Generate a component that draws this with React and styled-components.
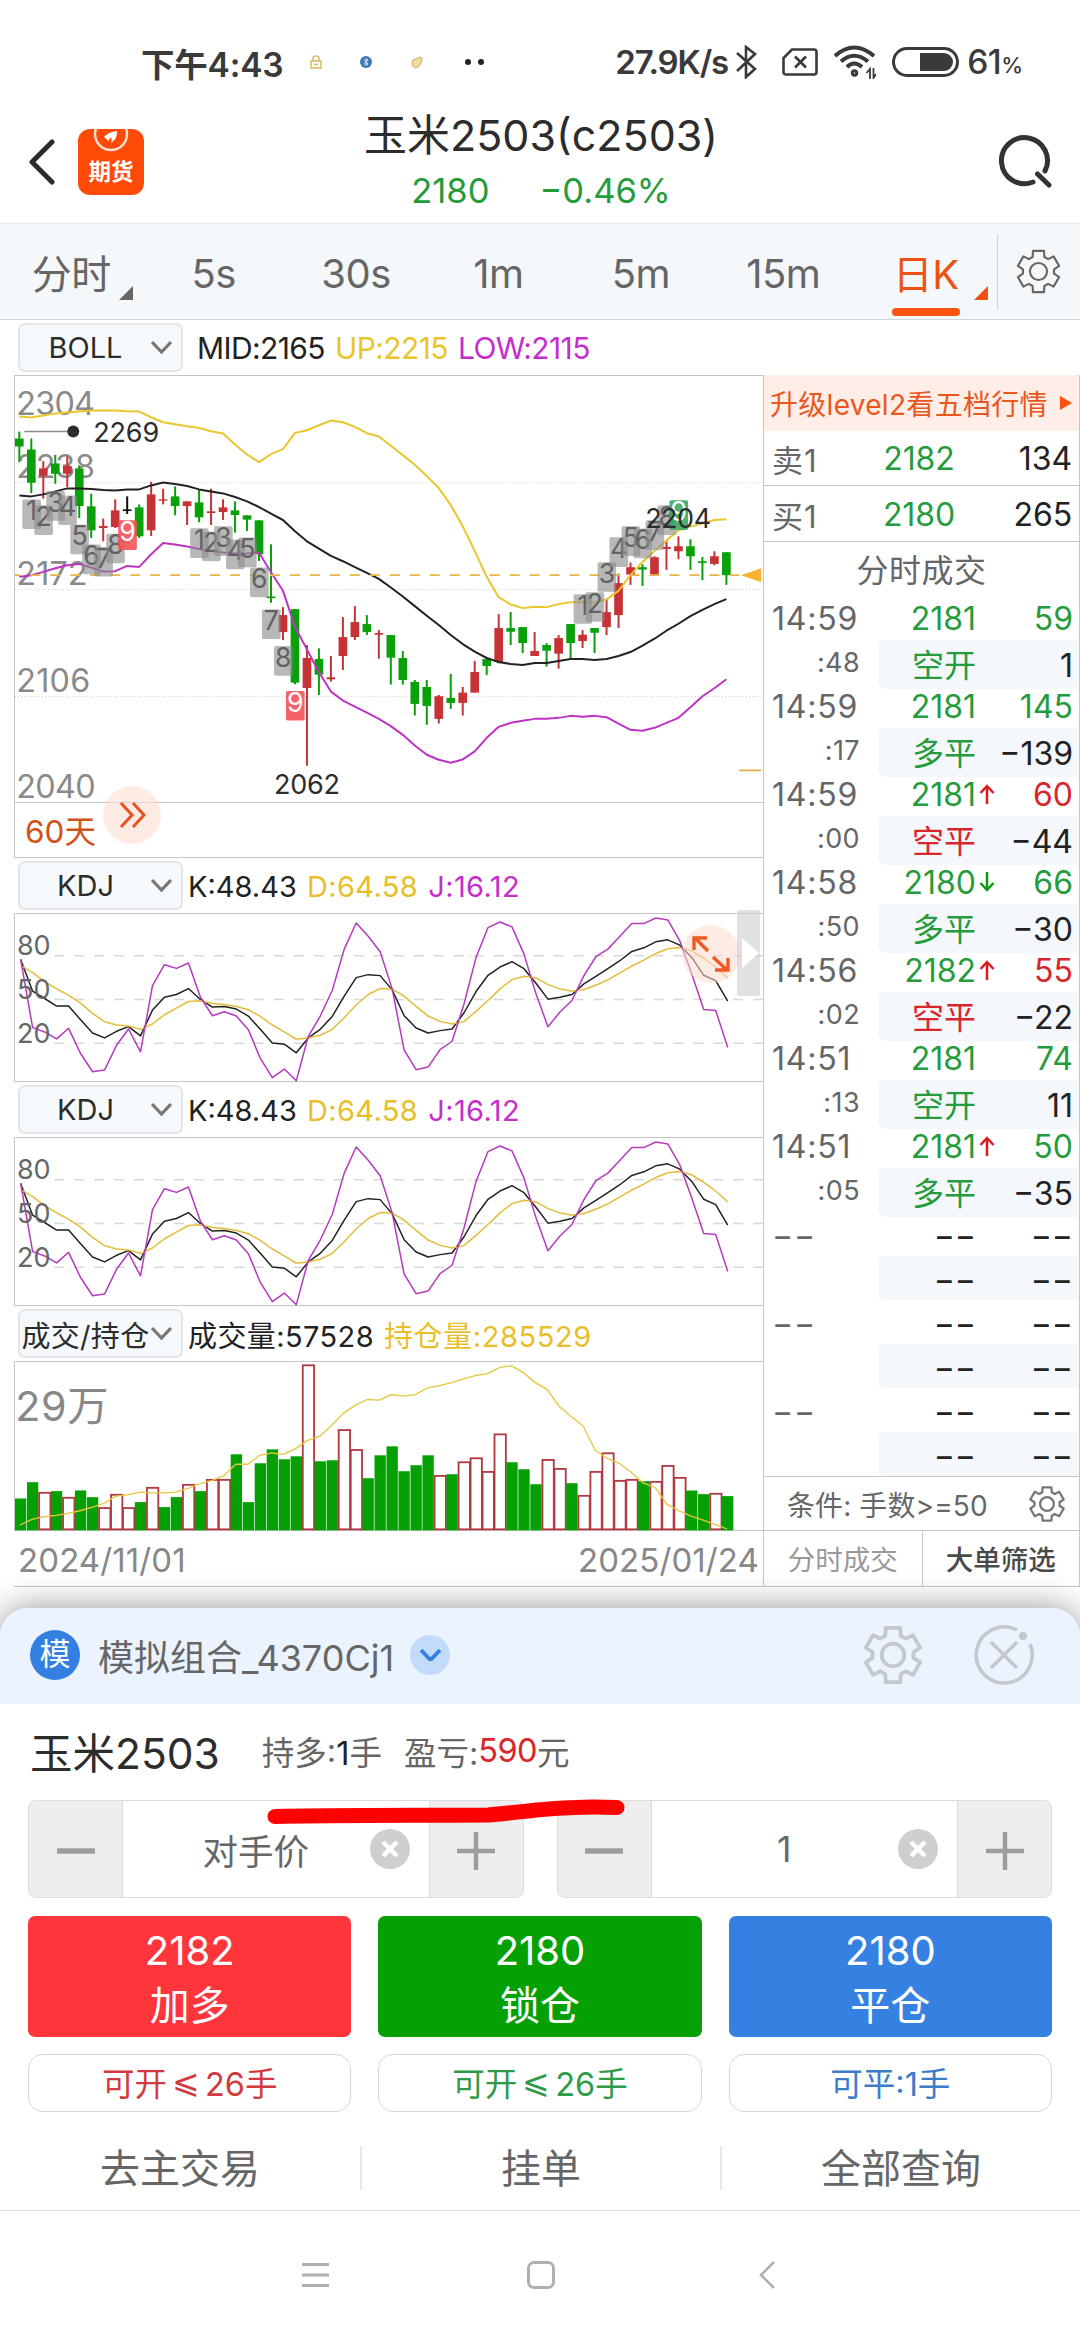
import React from 'react'
import styled, { createGlobalStyle, css } from 'styled-components'

const GlobalStyle = createGlobalStyle`
    * { box-sizing: border-box; }
    body {
        margin: 0;
        background: #fff;
    }
`;

const FONT = `Inter, "Noto Sans CJK SC", sans-serif`;
const GREEN = "#259b3c";
const RED = "#d9262c";
const LINE = "#c6c6c6";

/* ---------- data ---------- */

// [color, high, body top, body bottom, low]
const CANDLES = [
    ["g", 213, 234, 258, 305], ["g", 234, 267, 367, 398], ["r", 302, 324, 346, 415],
    ["g", 283, 309, 340, 370], ["r", 288, 316, 340, 380], ["g", 315, 324, 437, 473],
    ["g", 400, 438, 510, 533], ["r", 475, 497, 503, 543], ["r", 417, 450, 500, 503],
    ["k", 408, 447, 452, 461], ["g", 432, 441, 528, 533], ["r", 364, 402, 510, 527],
    ["r", 385, 417, 421, 432], ["g", 378, 408, 437, 465], ["r", 423, 423, 437, 494],
    ["g", 388, 426, 471, 486], ["r", 385, 453, 458, 494], ["r", 417, 441, 455, 479],
    ["g", 423, 450, 464, 517], ["g", 465, 465, 478, 512], ["g", 480, 480, 582, 602],
    ["g", 552, 709, 714, 728], ["r", 741, 765, 816, 840], ["g", 747, 747, 968, 973],
    ["r", 855, 894, 984, 1218], ["g", 865, 897, 944, 1005], ["r", 888, 952, 958, 965],
    ["r", 771, 831, 888, 930], ["r", 738, 786, 831, 840], ["g", 765, 792, 816, 825],
    ["r", 810, 819, 824, 896], ["g", 825, 825, 893, 974], ["g", 873, 894, 960, 974],
    ["g", 960, 966, 1032, 1067], ["g", 960, 981, 1038, 1095], ["r", 1005, 1009, 1077, 1091],
    ["g", 942, 1014, 1029, 1047], ["r", 981, 998, 1029, 1067], ["r", 903, 936, 998, 998],
    ["g", 893, 897, 918, 945], ["r", 762, 804, 906, 910], ["g", 756, 804, 815, 855],
    ["g", 801, 801, 849, 879], ["r", 816, 873, 888, 888], ["g", 849, 855, 872, 920],
    ["r", 825, 834, 881, 926], ["g", 792, 792, 849, 895], ["r", 810, 824, 843, 864],
    ["g", 804, 804, 818, 879], ["r", 715, 756, 801, 825], ["r", 640, 669, 765, 804],
    ["r", 607, 621, 643, 674], ["g", 612, 621, 628, 677], ["r", 588, 591, 643, 644],
    ["r", 543, 560, 566, 629], ["r", 528, 558, 573, 597], ["g", 537, 558, 588, 629],
    ["g", 590, 603, 608, 660], ["r", 573, 588, 611, 615], ["g", 576, 576, 645, 674],
];

const UP = [168, 171, 165, 159, 156, 153, 150, 150, 150, 152, 153, 170, 185, 191, 197, 202, 212, 219, 252, 282, 305, 281, 266, 217, 209, 194, 180, 185, 199, 218, 228, 256, 284, 313, 347, 383, 434, 498, 572, 650, 711, 733, 744, 740, 741, 732, 726, 726, 726, 718, 692, 645, 605, 572, 541, 510, 499, 490, 479, 477];
const MID = [405, 408, 402, 393, 384, 384, 386, 389, 390, 387, 387, 375, 366, 371, 377, 387, 393, 399, 410, 423, 440, 460, 479, 513, 543, 565, 587, 603, 621, 638, 656, 682, 709, 738, 767, 795, 825, 852, 875, 894, 906, 912, 915, 909, 909, 903, 897, 897, 900, 897, 888, 876, 857, 836, 812, 791, 768, 749, 732, 717];
const LOW = [650, 645, 635, 624, 615, 611, 622, 634, 633, 617, 620, 582, 548, 553, 559, 566, 573, 577, 580, 580, 577, 636, 692, 800, 868, 937, 995, 1022, 1040, 1058, 1077, 1099, 1125, 1157, 1185, 1200, 1209, 1199, 1175, 1134, 1101, 1089, 1083, 1077, 1077, 1074, 1068, 1071, 1068, 1072, 1091, 1110, 1113, 1104, 1089, 1074, 1042, 1009, 985, 958];

const K = [326, 422, 444, 467, 467, 508, 548, 563, 543, 529, 557, 479, 440, 432, 414, 447, 470, 468, 476, 497, 537, 578, 582, 608, 563, 537, 498, 437, 381, 372, 375, 418, 496, 533, 548, 541, 536, 487, 423, 374, 349, 333, 354, 398, 446, 440, 432, 400, 377, 354, 330, 302, 291, 273, 267, 283, 320, 374, 390, 452];
const D = [344, 366, 393, 415, 434, 458, 489, 514, 524, 527, 537, 521, 493, 473, 453, 451, 459, 462, 468, 478, 498, 524, 545, 567, 563, 555, 537, 502, 463, 432, 414, 416, 437, 468, 497, 513, 521, 513, 483, 450, 415, 387, 377, 382, 402, 415, 422, 417, 404, 388, 367, 346, 328, 308, 294, 290, 300, 323, 349, 382];
const J = [326, 532, 545, 566, 534, 610, 665, 660, 585, 536, 605, 405, 342, 353, 337, 440, 496, 484, 497, 538, 625, 683, 657, 692, 558, 497, 420, 295, 216, 256, 303, 415, 600, 659, 651, 598, 573, 460, 320, 230, 213, 228, 310, 430, 529, 485, 450, 375, 318, 295, 256, 218, 218, 201, 207, 270, 370, 477, 480, 592];

const VOLUME = [595, 546, 576, 573, 591, 571, 591, 622, 582, 622, 606, 561, 621, 591, 552, 573, 537, 537, 462, 606, 489, 447, 477, 468, 192, 483, 480, 387, 447, 534, 465, 438, 513, 495, 465, 525, 522, 484, 472, 513, 400, 486, 507, 552, 477, 504, 549, 585, 513, 457, 540, 537, 543, 543, 495, 531, 571, 582, 579, 588];
const VOLUME_COLOR = "ggrgrggrrrgrggrgrrggggggrggrrgggggg" + "rgrrrrgggrrgrrrrrgrrrgg" + "rg";
const OPEN_INTEREST = [675, 658, 650, 646, 640, 632, 622, 610, 588, 584, 576, 578, 578, 576, 565, 550, 541, 527, 492, 492, 465, 458, 462, 445, 420, 408, 375, 338, 314, 297, 299, 282, 287, 282, 262, 255, 246, 235, 225, 219, 201, 195, 216, 246, 267, 318, 348, 377, 450, 474, 489, 516, 548, 562, 613, 632, 648, 660, 673, 687];

// first candle of each count, then the top of every box
const MARKS = [
    { from: 1, tops: [417, 435, 392, 405, 493, 553, 560, 520, 480], last: "#f55257" },
    { from: 15, tops: [504, 514, 498, 538, 532, 622, 748, 858, 993], last: "#f55257" },
    { from: 47, tops: [702, 696, 606, 531, 498, 505, 480, 435, 420], last: "#3fa764" },
];

const TRADES = [
    { time: "14:59", sec: ":48", price: 2181, hands: 59, kind: "空开", change: "1" },
    { time: "14:59", sec: ":17", price: 2181, hands: 145, kind: "多平", change: "−139" },
    { time: "14:59", sec: ":00", price: 2181, arrow: "up", hands: 60, kind: "空平", change: "−44", red: true },
    { time: "14:58", sec: ":50", price: 2180, arrow: "down", hands: 66, kind: "多平", change: "−30" },
    { time: "14:56", sec: ":02", price: 2182, arrow: "up", hands: 55, kind: "空平", change: "−22", red: true },
    { time: "14:51", sec: ":13", price: 2181, hands: 74, kind: "空开", change: "11" },
    { time: "14:51", sec: ":05", price: 2181, arrow: "up", hands: 50, kind: "多平", change: "−35" },
];

const TABS = [
    { name: "分时", more: true }, { name: "5s" }, { name: "30s" }, { name: "1m" },
    { name: "5m" }, { name: "15m" }, { name: "日K", more: true, active: true },
];

/* ---------- styled ---------- */

const Page = styled.div`
    position: relative;
    width: 1080px;
    height: 2340px;
    overflow: hidden;
    display: flex;
    flex-direction: column;
    background: #fff;
    font-family: ${FONT};
    color: #2c2c2c;
    white-space: nowrap;
    svg { display: block; flex: none; }
`;

const StatusBar = styled.div`
    height: 124px;
    padding: 0 58px 0 141px;
    display: flex;
    align-items: center;
    color: #3a3a3a;
    font-size: 33.5px;
    font-weight: 500;
    small { font-size: 22px; margin-top: 6px; letter-spacing: -1px; }
`;

const StatusGroup = styled.div`
    display: flex;
    align-items: center;
    gap: ${p => p.$gap || 0}px;
    margin-left: ${p => p.$end ? "auto" : 0};
`;

const Clock = styled.span`
    margin-right: 27px;
    font-weight: 600;
    letter-spacing: -0.2px;
`;

const Speed = styled.span`
    letter-spacing: -1.1px;
    font-weight: 600;
    font-size: 33px;
    margin-right: 8px;
`;

const Dots = styled.span`
    display: flex;
    gap: 7px;
    margin-left: 4px;
    i { width: 6px; height: 6px; border-radius: 50%; background: #222; }
`;

const Header = styled.header`
    height: 99px;
    display: grid;
    grid-template-columns: 200px 1fr 200px;
    align-items: start;
`;

const HeaderSide = styled.div`
    height: 75px;
    display: flex;
    align-items: center;
    justify-content: ${p => p.$end ? "flex-end" : "flex-start"};
    padding: ${p => p.$end ? "0 27px 0 0" : "0 0 0 28px"};
    gap: 23px;
`;

const AppBadge = styled.div`
    width: 66px;
    height: 66px;
    border-radius: 12px;
    background: #ff4a08;
    display: flex;
    flex-direction: column;
    align-items: center;
    overflow: hidden;
    color: #fff;
    font-size: 22.5px;
    font-weight: 700;
    line-height: 36px;
`;

const Title = styled.div`
    text-align: center;
    padding-left: 2px;
    h1 {
        margin: -14px 0 0;
        font-size: 43px;
        font-weight: 400;
        line-height: 50px;
    }
    p {
        margin: 8px 0 0;
        display: flex;
        justify-content: center;
        gap: 50px;
        font-size: 34.5px;
        line-height: 46px;
        color: ${GREEN};
    }
`;

const TabBar = styled.nav`
    height: 97px;
    display: flex;
    align-items: center;
    background: #f5f8fb;
    border-top: 1px solid #e6eaee;
    border-bottom: 1px solid #cfd6dd;
`;

const Tab = styled.div`
    position: relative;
    flex: 1;
    height: 100%;
    display: flex;
    justify-content: center;
    align-items: center;
    padding-top: ${p => p.$more ? 1 : 4}px;
    font-size: 40px;
    letter-spacing: -0.5px;
    color: ${p => p.$active ? "#ef5113" : "#666"};
    ${p => p.$more && css`
        &::before {
            content: "";
            position: absolute;
            right: 9px;
            bottom: 19px;
            border-left: 14px solid transparent;
            border-bottom: 14px solid currentColor;
        }
    `}
    ${p => p.$active && css`
        &::after {
            content: "";
            position: absolute;
            bottom: 3px;
            left: calc(50% - 34px);
            width: 68px;
            height: 8px;
            border-radius: 4px;
            background: #fa5410;
        }
    `}
`;

const TabSettings = styled.div`
    width: 83px;
    height: 76px;
    border-left: 1px solid #d0d4d8;
    display: flex;
    align-items: center;
    justify-content: center;
`;

const IndicatorRow = styled.div`
    height: 55px;
    padding: 3px 0 3px ${p => p.$inset || 4}px;
    display: flex;
    align-items: center;
    font-size: ${p => p.$size || 29}px;
`;

const Selector = styled.div`
    width: 165px;
    height: 49px;
    border: 2px solid #e2e6ea;
    border-radius: 7px;
    background: #f6f9fb;
    display: grid;
    grid-template-columns: 131px 1fr;
    align-items: center;
    text-align: center;
    font-size: 29px;
    letter-spacing: ${p => p.$spacing || 0}px;
`;

const Value = styled.span`
    color: ${p => p.$color || "#222"};
    margin-left: ${p => p.$gap || 10}px;
    padding-top: 1px;
    letter-spacing: ${p => p.$spacing ?? 0.4}px;
`;

const Body = styled.div`
    display: grid;
    grid-template-columns: 749px 317px;
    margin-left: 14px;
    height: 1212px;
    border-bottom: 1px solid ${LINE};
`;

const Charts = styled.div`
    display: flex;
    flex-direction: column;
`;

const ChartBox = styled.div`
    position: relative;
    height: ${p => p.$height}px;
    border: 1px solid ${LINE};
    border-right: 0;
    svg { width: 100%; height: 100%; overflow: visible; }
`;

const RangeBar = styled.div`
    position: relative;
    height: 55px;
    border-left: 1px solid ${LINE};
    border-bottom: 1px solid ${LINE};
    padding: 0 0 2px 10px;
    display: flex;
    align-items: center;
    font-size: 31.5px;
    color: #cf5219;
`;

const RoundButton = styled.div`
    position: absolute;
    left: ${p => p.$left}px;
    top: ${p => p.$top}px;
    width: 58px;
    height: 58px;
    border-radius: 50%;
    background: rgba(253, 219, 206, .55);
    display: flex;
    align-items: center;
    justify-content: center;
    && svg { width: auto; height: auto; }
`;

const SideHandle = styled.div`
    position: absolute;
    right: 3px;
    top: -4px;
    width: 23px;
    height: 86px;
    border-radius: 2px;
    background: rgba(205, 205, 205, .6);
    display: flex;
    align-items: center;
    justify-content: flex-end;
    padding-right: 1px;
    &::after {
        content: "";
        border: 15px solid transparent;
        border-left: 17px solid #fff;
        border-right: 0;
    }
`;

const Dates = styled.div`
    flex: 1;
    display: flex;
    align-items: center;
    justify-content: space-between;
    padding: 3px 4px 0 4px;
    font-size: 33px;
    letter-spacing: 0.1px;
    color: #888;
`;

const Quotes = styled.aside`
    border-left: 1px solid ${LINE};
    border-right: 1px solid ${LINE};
    display: flex;
    flex-direction: column;
`;

const Upgrade = styled.div`
    height: 56px;
    background: #ffeee7;
    color: #e8571c;
    font-size: 28px;
    letter-spacing: 0.3px;
    display: flex;
    align-items: center;
    gap: 12px;
    padding-left: 6px;
    &::after {
        content: "";
        border: 7px solid transparent;
        border-left: 12px solid #ff4f0c;
        border-right: 0;
    }
`;

const QuoteRow = styled.div`
    height: 55.4px;
    padding: 1px 7px 0 8px;
    border-bottom: 1px solid ${LINE};
    display: grid;
    grid-template-columns: 90px 114px 1fr;
    align-items: center;
    font-size: 32px;
    letter-spacing: -0.1px;
    color: #222;
    span { color: #666; font-size: 31px; letter-spacing: 1px; }
    b { font-weight: 400; color: ${GREEN}; text-align: center; }
    i { font-style: normal; text-align: right; }
`;

const TradesTitle = styled.div`
    height: 54px;
    display: flex;
    align-items: center;
    justify-content: center;
    padding-bottom: 2px;
    font-size: 32px;
    color: #666;
    letter-spacing: 0.5px;
`;

const TradeLine = styled.div`
    height: 44.03px;
    display: grid;
    grid-template-columns: 114px 98px 1fr;
    align-items: center;
    font-size: 32px;
    color: #222;
`;

const Time = styled.span`
    padding: 2px 0 0 8px;
    letter-spacing: 0.8px;
    color: #666;
`;

const Seconds = styled.span`
    padding-right: 18px;
    margin-top: -4px;
    text-align: right;
    color: #666;
    font-size: 27px;
    letter-spacing: 0.4px;
`;

const Cell = styled.span`
    position: relative;
    height: 100%;
    display: flex;
    align-items: center;
    justify-content: flex-end;
    padding: ${p => p.$kind ? "0 0 3px" : "2px 0 0"};
    padding-right: ${p => p.$last ? 6 : 0}px;
    color: ${p => p.$color || "inherit"};
    background: ${p => p.$shade ? "#f4f7fb" : "transparent"};
    border-radius: ${p => p.$shade && !p.$last ? "6px 0 0 6px" : 0};
    svg { position: absolute; left: 100%; margin-left: 3px; top: 12px; }
`;

const Condition = styled.div`
    height: 54px;
    border-top: 1px solid ${LINE};
    padding: 0 13px 0 23px;
    display: flex;
    align-items: center;
    justify-content: space-between;
    font-size: 28px;
    letter-spacing: 0.1px;
    color: #666;
`;

const QuoteTabs = styled.div`
    flex: 1;
    border-top: 1px solid ${LINE};
    display: grid;
    grid-template-columns: 1fr 1fr;
`;

const QuoteTab = styled.div`
    display: flex;
    align-items: center;
    justify-content: center;
    padding-bottom: 1px;
    font-size: 27.5px;
    font-weight: ${p => p.$active ? 500 : 400};
    color: ${p => p.$active ? "#4a4a4a" : "#999"};
    & + & { border-left: 1px solid ${LINE}; }
`;

const Sheet = styled.section`
    position: relative;
    margin-top: 21px;
    flex: 1;
    border-radius: 28px 28px 0 0;
    background: #fff;
    box-shadow: 0 0 34px rgba(0, 0, 0, .42);
`;

const SheetHead = styled.div`
    height: 96px;
    border-radius: 28px 28px 0 0;
    background: #ebf3ff;
    padding: 0 46px 2px 30px;
    display: flex;
    align-items: center;
    font-size: 36px;
    color: #666;
    & > svg { margin-left: 50px; }
    & > svg:nth-of-type(1) { margin-left: auto; }
`;

const Avatar = styled.div`
    width: 50px;
    height: 50px;
    border-radius: 50%;
    background: #3480e0;
    color: #fff;
    font-size: 31px;
    line-height: 48px;
    text-align: center;
    margin-right: 18px;
`;

const Drop = styled.div`
    width: 40px;
    height: 40px;
    border-radius: 50%;
    background: #c2dbfa;
    margin-left: 16px;
    display: flex;
    align-items: center;
    justify-content: center;
`;

const Position = styled.div`
    height: 96px;
    padding: 0 0 3px 30px;
    display: flex;
    align-items: center;
    font-size: 32.5px;
    color: #666;
    strong { font-weight: 400; font-size: 42.5px; color: #2c2c2c; margin-right: 42px; }
    b { font-weight: 400; color: #222; }
    em { font-style: normal; color: ${RED}; letter-spacing: -0.6px; }
    span { margin-right: 22px; }
`;

const Steppers = styled.div`
    padding: 0 28px;
    display: grid;
    grid-template-columns: 1fr 1fr;
    gap: 33px;
`;

const Stepper = styled.div`
    height: 98px;
    border: 1px solid #dcdcdc;
    border-radius: 8px;
    overflow: hidden;
    display: grid;
    grid-template-columns: 93px 1fr 93px;
    background: #eee;
    color: #9c9c9c;
`;

const StepButton = styled.div`
    display: flex;
    align-items: center;
    justify-content: center;
    padding-top: 3px;
`;

const StepValue = styled.div`
    background: #fff;
    border: solid #dcdcdc;
    border-width: 0 1px;
    display: grid;
    grid-template-columns: 38px 1fr 78px;
    align-items: center;
    text-align: center;
    font-size: 35.5px;
    color: #666;
    svg { grid-column: 3; justify-self: center; }
    span { grid-column: 2; }
`;

const Actions = styled.div`
    padding: 18px 28px 0;
    display: grid;
    grid-template-columns: repeat(3, 1fr);
    gap: 17px 27px;
`;

const Action = styled.div`
    height: 121px;
    border-radius: 7px;
    background: ${p => p.$color};
    color: #fff;
    text-align: center;
    font-size: 40px;
    line-height: 55px;
    padding: 7px 0;
`;

const Limit = styled.div`
    height: 58px;
    border: 1px solid #d6d6d6;
    border-radius: 15px;
    color: ${p => p.$color};
    display: flex;
    align-items: center;
    justify-content: center;
    padding-bottom: 3px;
    font-size: 32.5px;
    i { font-style: normal; margin: 0 5px; }
`;

const Links = styled.div`
    height: 99px;
    padding-top: 14px;
    border-bottom: 1px solid #dedede;
    display: grid;
    grid-template-columns: repeat(3, 1fr);
    align-items: center;
`;

const LinkItem = styled.div`
    height: 44px;
    line-height: 45px;
    text-align: center;
    font-size: 40px;
    color: #666;
    & + & { border-left: 2px solid #e8e8e8; }
`;

const SystemNav = styled.div`
    height: 128px;
    padding: 0 200px 0 203px;
    display: grid;
    grid-template-columns: repeat(3, 1fr);
    align-items: center;
    justify-items: center;
`;

const RedStroke = styled.svg`
    position: absolute;
    left: 260px;
    top: 185px;
`;

/* ---------- icons ---------- */

const polar = (r, deg) => {
    const a = deg * Math.PI / 180;
    return `${(r * Math.sin(a)).toFixed(2)},${(-r * Math.cos(a)).toFixed(2)}`;
};

const gearPoints = [0, 60, 120, 180, 240, 300]
    .map(a => [polar(22, a - 22), polar(30, a - 15), polar(30, a + 15), polar(22, a + 22)].join(" "))
    .join(" ");

const Gear = ({ size, color, stroke }) => (
    <svg width={size} height={size} viewBox="-33 -33 66 66" fill="none" stroke={color} strokeWidth={stroke} strokeLinejoin="round">
        <polygon points={gearPoints} />
        <circle r="12" />
    </svg>
);

const Chevron = ({ size, color, width = 3 }) => (
    <svg width={size} height={size * 0.6} viewBox="0 0 20 12" fill="none" stroke={color} strokeWidth={width}>
        <path d="M1 1 L10 10.5 L19 1" />
    </svg>
);

const Clear = () => (
    <svg width="40" height="40" viewBox="-20 -20 40 40">
        <circle r="20" fill="#cfcfcf" />
        <path d="M-7 -7 L7 7 M7 -7 L-7 7" stroke="#fff" strokeWidth="4.5" />
    </svg>
);

const Minus = () => (
    <svg width="38" height="38" viewBox="-19 -19 38 38">
        <path d="M-19 0 H19" stroke="#9c9c9c" strokeWidth="5.5" />
    </svg>
);

const Plus = () => (
    <svg width="38" height="38" viewBox="-19 -19 38 38">
        <path d="M-19 0 H19 M0 -19 V19" stroke="#9c9c9c" strokeWidth="4.5" />
    </svg>
);

const Arrow = ({ dir }) => (
    <svg width="16" height="20" viewBox="0 0 16 20" fill="none" strokeWidth="2.5"
        stroke={dir === "up" ? "#e0191f" : "#0a9a12"}
        transform={dir === "up" ? undefined : "rotate(180)"}>
        <path d="M8 20 V2 M1.5 9 L8 2 L14.5 9" />
    </svg>
);

/* ---------- charts ---------- */

const STEP = 36;
const colors = { g: "#0aa00a", r: "#c63236", k: "#111" };
const line = (ys, x0) => ys.map((y, i) => `${x0 + i * STEP},${y}`).join(" ");

const Mark = ({ x, y, n, fill, last }) => (
    <g>
        <rect x={x - 28} y={y} width="56" height="89" rx="5" fill={fill} fillOpacity={last ? .9 : .62} />
        <text x={x} y={y + 62} fontSize="80" textAnchor="middle" fill={last ? "#fff" : "#626262"}>{n}</text>
    </g>
);

const MainChart = () => (
    <svg viewBox="44 46 2247 1281" preserveAspectRatio="none">
        {[367, 688, 1010].map(y => (
            <line key={y} x1="44" x2="2291" y1={y} y2={y} stroke="#cfcfcf" strokeWidth="3" strokeDasharray="3 6" />
        ))}
        <g fontSize="97" fill="#8a8a8a">
            <text x="48" y="164" textLength="236">2304</text>
            <text x="48" y="353" textLength="236">2238</text>
            <text x="48" y="675" textLength="214">2172</text>
            <text x="48" y="996" textLength="222">2106</text>
            <text x="48" y="1316" textLength="238">2040</text>
        </g>
        {CANDLES.map(([c, high, top, bottom, low], i) => {
            const x = 57 + i * STEP;
            return (
                <g key={i} fill={colors[c]}>
                    <rect x={x - 3} y={high} width="6" height={low - high} />
                    <rect x={x - 13} y={top} width="26" height={bottom - top} />
                </g>
            );
        })}
        <g fill="none" strokeWidth="6" strokeLinejoin="round">
            <polyline points={line(UP, 57)} stroke="#e8c62c" />
            <polyline points={line(MID, 57)} stroke="#222" />
            <polyline points={line(LOW, 57)} stroke="#bd34c4" />
        </g>
        <line x1="44" x2="2225" y1="645" y2="645" stroke="#e9b548" strokeWidth="5" strokeDasharray="30 30" strokeDashoffset="14" />
        <polygon points="2225,645 2286,624 2286,666" fill="#fbb22e" />
        <line x1="2220" x2="2286" y1="1232" y2="1232" stroke="#e0ac3c" strokeWidth="5" />
        {MARKS.map(m => m.tops.map((y, i) => (
            <Mark key={m.from + i} x={58 + (m.from + i) * STEP} y={y} n={i + 1} last={i === 8} fill={i === 8 ? m.last : "#8c8c8c"} />
        )))}
        <line x1="72" x2="219" y1="213" y2="213" stroke="#8a8a8a" strokeWidth="5" />
        <circle cx="219" cy="213" r="18" fill="#2c2c2c" />
        <g fontSize="81" fill="#2c2c2c">
            <text x="279" y="245" textLength="198">2269</text>
            <text x="822" y="1304" textLength="198">2062</text>
            <text x="1937" y="502" textLength="198">2204</text>
        </g>
    </svg>
);

const KdjChart = () => (
    <svg viewBox="44 189 2247 504" preserveAspectRatio="none">
        {[315, 447, 579].map(y => (
            <line key={y} x1="162" x2="2291" y1={y} y2={y} stroke="#d8d8d8" strokeWidth="4" strokeDasharray="30 30" />
        ))}
        <g fill="none" strokeWidth="4.5" strokeLinejoin="round">
            <polyline points={line(K, 61)} stroke="#222" />
            <polyline points={line(D, 61)} stroke="#e3bd3a" />
            <polyline points={line(J, 61)} stroke="#b33bbd" />
        </g>
        <g fontSize="81" fill="#666">
            <text x="50" y="314" textLength="101">80</text>
            <text x="50" y="446" textLength="101">50</text>
            <text x="50" y="578" textLength="101">20</text>
        </g>
    </svg>
);

const VolumeChart = () => (
    <svg viewBox="44 184 2247 506" preserveAspectRatio="none">
        {VOLUME.map((y, i) => {
            const x = 61 + i * STEP;
            return VOLUME_COLOR[i] === "g"
                ? <rect key={i} x={x - 17} y={y} width="34" height={691 - y} fill="#04a004" />
                : <rect key={i} x={x - 16.5} y={y + 2} width="34" height={686 - y} fill="#fff" stroke="#b13a42" strokeWidth="5.5" />;
        })}
        <polyline points={line(OPEN_INTEREST, 59)} fill="none" stroke="#e6c83e" strokeWidth="4" />
        <text x="45" y="362" fontSize="124" fill="#888" textLength="280">29万</text>
    </svg>
);

const KdjRow = () => (
    <IndicatorRow>
        <Selector>KDJ <Chevron size={21} color="#777" /></Selector>
        <Value $gap={5} $spacing={0}>K:48.43</Value>
        <Value $color="#e8be2a">D:64.58</Value>
        <Value $color="#c42ecc">J:16.12</Value>
    </IndicatorRow>
);

/* ---------- page ---------- */

const Trade = ({ time, sec, price, arrow, hands, kind, change, red }) => (
    <>
        <TradeLine>
            <Time>{time}</Time>
            <Cell $color={GREEN}>{price}{arrow && <Arrow dir={arrow} />}</Cell>
            <Cell $last $color={red ? RED : GREEN}>{hands}</Cell>
        </TradeLine>
        <TradeLine>
            <Seconds>{sec}</Seconds>
            <Cell $shade $kind $color={red ? RED : GREEN}>{kind}</Cell>
            <Cell $shade $last>{change}</Cell>
        </TradeLine>
    </>
);

const EmptyTrade = () => (
    <>
        <TradeLine>
            <Time>−−</Time>
            <Cell>−−</Cell>
            <Cell $last>−−</Cell>
        </TradeLine>
        <TradeLine>
            <span />
            <Cell $shade>−−</Cell>
            <Cell $shade $last>−−</Cell>
        </TradeLine>
    </>
);

const Status = () => (
    <StatusBar>
        <Clock>下午4:43</Clock>
        <StatusGroup $gap={38}>
            <svg width="12" height="14" viewBox="0 0 12 14" fill="none" stroke="#d8b45c" strokeWidth="1.4">
                <path d="M3 6 V3.5 a3 2.6 0 0 1 6 0 V6 M1 6 H11 V13 H1 Z M4 9.5 H8" />
            </svg>
            <svg width="12" height="12" viewBox="0 0 12 12">
                <circle cx="6" cy="6" r="6" fill="#3d79b5" />
                <path d="M4 3.5 L8 8 L6 9.5 V2.5 L8 4 L4 8.5" fill="none" stroke="#dceaf6" />
            </svg>
            <svg width="13" height="13" viewBox="0 0 13 13" fill="#f4dc9c" stroke="#c8a860">
                <path d="M2 7 Q2 3 6 3 L10 1 L12 2 L11 7 Q9 12 5 12 Q2 11 2 7 Z" />
            </svg>
            <Dots><i /><i /></Dots>
        </StatusGroup>
        <StatusGroup $end>
            <Speed>27.9K/s</Speed>
            <svg width="21" height="34" viewBox="0 0 21 34" fill="none" stroke="#3a3a3a" strokeWidth="2.6">
                <path d="M1 8 L19 24 L10 32 V2 L19 9 L1 26" />
            </svg>
            <svg width="36" height="28" viewBox="0 0 36 28" fill="none" stroke="#3a3a3a" strokeWidth="2.6" style={{ marginLeft: 25 }}>
                <path d="M10 1.5 H32 Q34.5 1.5 34.5 4 V24 Q34.5 26.5 32 26.5 H4 Q1.5 26.5 1.5 24 V10 Z M13 8.5 L24 19.5 M24 8.5 L13 19.5" />
            </svg>
            <svg width="43" height="34" viewBox="0 0 43 34" fill="none" stroke="#3a3a3a" strokeWidth="4" style={{ marginLeft: 15 }}>
                <path d="M2 11 Q21 -6 41 11 M8 16.5 Q21 5 35 16.5 M14 22 Q21 15 29 22" />
                <circle cx="21.5" cy="28" r="2.2" strokeWidth="3" />
                <path d="M37 34 V24 L33.5 28 M40.5 23 V33 L43 29" strokeWidth="1.8" />
            </svg>
            <svg width="67" height="30" viewBox="0 0 67 30" style={{ marginLeft: 16 }}>
                <rect x="1.5" y="1.5" width="64" height="27" rx="13.5" fill="none" stroke="#3a3a3a" strokeWidth="3" />
                <path d="M28 6 H52 A9 9 0 0 1 52 24 H28 Z" fill="#3a3a3a" />
            </svg>
            <span style={{ marginLeft: 8, letterSpacing: -0.5 }}>61</span>
            <small>%</small>
        </StatusGroup>
    </StatusBar>
);

const App = () => {
    return (
        <Page>
            <GlobalStyle />
            <Status />
            <Header>
                <HeaderSide>
                    <svg width="27" height="46" viewBox="0 0 27 46" fill="none" stroke="#2c2c2c" strokeWidth="5" strokeLinecap="round" strokeLinejoin="round">
                        <path d="M24 3 L4 23 L24 43" />
                    </svg>
                    <AppBadge>
                        <svg width="36" height="25" viewBox="0 0 36 25">
                            <circle cx="18" cy="5" r="16" fill="none" stroke="#ffe1d3" strokeWidth="2.4" />
                            <path d="M11 8 Q15 3 24 2 Q25 9 18 14 Q19 10 18 8 Q16 11 15 12 Q13 9 11 8 Z" fill="#fff" />
                        </svg>
                        期货
                    </AppBadge>
                </HeaderSide>
                <Title>
                    <h1>玉米2503(c2503)</h1>
                    <p><span>2180</span><span>−0.46%</span></p>
                </Title>
                <HeaderSide $end>
                    <svg width="54" height="54" viewBox="0 0 54 54" fill="none" stroke="#333" strokeWidth="5" strokeLinecap="round">
                        <path d="M34 47 A23 23 0 1 1 46 36 M38.500 39 L50 50" />
                    </svg>
                </HeaderSide>
            </Header>
            <TabBar>
                {TABS.map(t => <Tab key={t.name} $more={t.more} $active={t.active}>{t.name}</Tab>)}
                <TabSettings><Gear size={47} color="#666" stroke={3} /></TabSettings>
            </TabBar>
            <IndicatorRow $inset={18} $size={30}>
                <Selector>BOLL <Chevron size={21} color="#777" /></Selector>
                <Value $gap={14} $spacing={-0.6}>MID:2165</Value>
                <Value $color="#e8c62c" $spacing={-0.6}>UP:2215</Value>
                <Value $color="#c42ecc" $spacing={-0.6}>LOW:2115</Value>
            </IndicatorRow>
            <Body>
                <Charts>
                    <ChartBox $height={428}><MainChart /></ChartBox>
                    <RangeBar>
                        60天
                        <RoundButton $left={88} $top={-17}>
                            <svg width="27" height="26" viewBox="0 0 27 26" fill="none" stroke="#ec5020" strokeWidth="3">
                                <path d="M2 1 L13 13 L2 25 M14 1 L25 13 L14 25" />
                            </svg>
                        </RoundButton>
                    </RangeBar>
                    <KdjRow />
                    <ChartBox $height={169}>
                        <KdjChart />
                        <RoundButton $left={667} $top={11}>
                            <svg width="38" height="38" viewBox="0 0 38 38" fill="none" stroke="#ef5a22" strokeWidth="3.4">
                                <path d="M2 15 V3 H15 M3 3 L16 16 M36 23 V35 H23 M35 35 L21 22" />
                            </svg>
                        </RoundButton>
                        <SideHandle />
                    </ChartBox>
                    <KdjRow />
                    <ChartBox $height={169}><KdjChart /></ChartBox>
                    <IndicatorRow>
                        <Selector $spacing={0.3}>成交/持仓 <Chevron size={21} color="#777" /></Selector>
                        <Value $gap={5}>成交量:57528</Value>
                        <Value $color="#e8be2a" $spacing={0.6}>持仓量:285529</Value>
                    </IndicatorRow>
                    <ChartBox $height={170}><VolumeChart /></ChartBox>
                    <Dates><span>2024/11/01</span><span>2025/01/24</span></Dates>
                </Charts>
                <Quotes>
                    <Upgrade>升级level2看五档行情</Upgrade>
                    <QuoteRow><span>卖1</span><b>2182</b><i>134</i></QuoteRow>
                    <QuoteRow><span>买1</span><b>2180</b><i>265</i></QuoteRow>
                    <TradesTitle>分时成交</TradesTitle>
                    {TRADES.map((t, i) => <Trade key={i} {...t} />)}
                    <EmptyTrade />
                    <EmptyTrade />
                    <EmptyTrade />
                    <Condition>条件: 手数&gt;=50 <Gear size={38} color="#777" stroke={4} /></Condition>
                    <QuoteTabs>
                        <QuoteTab>分时成交</QuoteTab>
                        <QuoteTab $active>大单筛选</QuoteTab>
                    </QuoteTabs>
                </Quotes>
            </Body>
            <Sheet>
                <SheetHead>
                    <Avatar>模</Avatar>
                    模拟组合_4370Cj1
                    <Drop><Chevron size={21} color="#3480e0" width={3.6} /></Drop>
                    <Gear size={62} color="#c4c7cb" stroke={4} />
                    <svg width="60" height="60" viewBox="-30 -30 60 60" fill="none" stroke="#c4c7cb" strokeWidth="3.6">
                        <path d="M13 -25 A28 28 0 1 0 26 -11 M-13 -13 L13 13 M13 -13 L-13 13" />
                        <circle cx="19" cy="-19" r="4" fill="#c4c7cb" stroke="none" />
                    </svg>
                </SheetHead>
                <Position>
                    <strong>玉米2503</strong>
                    <span>持多:<b>1</b>手</span>
                    盈亏:<em>590</em>元
                </Position>
                <Steppers>
                    <Stepper>
                        <StepButton><Minus /></StepButton>
                        <StepValue><span>对手价</span><Clear /></StepValue>
                        <StepButton><Plus /></StepButton>
                    </Stepper>
                    <Stepper>
                        <StepButton><Minus /></StepButton>
                        <StepValue><span>1</span><Clear /></StepValue>
                        <StepButton><Plus /></StepButton>
                    </Stepper>
                </Steppers>
                <Actions>
                    <Action $color="#fe353b">2182<br />加多</Action>
                    <Action $color="#04a004">2180<br />锁仓</Action>
                    <Action $color="#3581e2">2180<br />平仓</Action>
                    <Limit $color="#d23a40">可开<i>⩽</i>26手</Limit>
                    <Limit $color="#2f9b48">可开<i>⩽</i>26手</Limit>
                    <Limit $color="#3a7cc8">可平:1手</Limit>
                </Actions>
                <Links>
                    <LinkItem>去主交易</LinkItem>
                    <LinkItem>挂单</LinkItem>
                    <LinkItem>全部查询</LinkItem>
                </Links>
                <SystemNav>
                    <svg width="27" height="24" viewBox="0 0 27 24" stroke="#b0b0b0" strokeWidth="3">
                        <path d="M0 1.5 H27 M0 12 H27 M0 22.500 H27" />
                    </svg>
                    <svg width="28" height="28" viewBox="0 0 28 28" fill="none" stroke="#b0b0b0" strokeWidth="3">
                        <rect x="1.5" y="1.5" width="25" height="25" rx="5.500" />
                    </svg>
                    <svg width="16" height="28" viewBox="0 0 16 28" fill="none" stroke="#b0b0b0" strokeWidth="2.6">
                        <path d="M15 1 L2 14 L15 27" />
                    </svg>
                </SystemNav>
                <RedStroke width="372" height="44" viewBox="260 1793 372 44" fill="none" stroke="#fd0202" strokeWidth="15" strokeLinecap="round" strokeLinejoin="round">
                    <path d="M275 1816.500 C330 1815 420 1815.500 488 1815 C515 1813 545 1808 575 1807.500 C590 1806.500 605 1807 617 1807.500" />
                </RedStroke>
            </Sheet>
        </Page>
    )
}

export default App;
